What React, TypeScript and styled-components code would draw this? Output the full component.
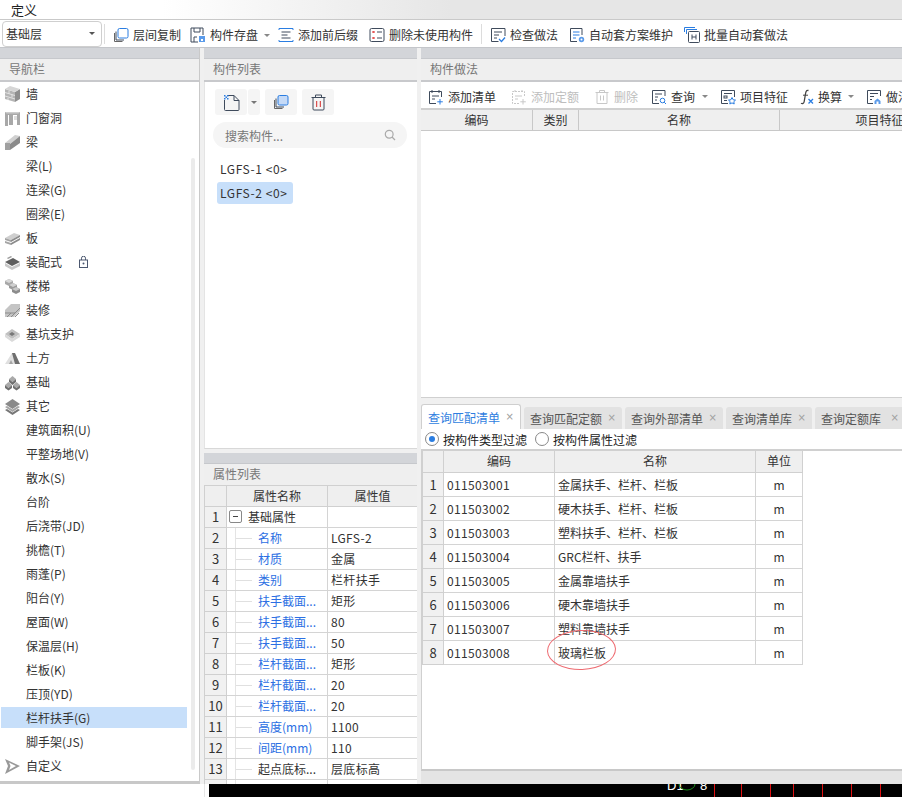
import React from "react";
import styled, { createGlobalStyle } from "styled-components";

const Global = createGlobalStyle`
  html, body { margin: 0; padding: 0; background: #fff; }
  * { box-sizing: border-box; }
  body { font-family: "Noto Sans CJK SC", "Noto Sans", sans-serif; font-size: 12px; color: #333; }
`;

const Page = styled.div`
  width: 902px; height: 797px; overflow: hidden; background: #fff;
  display: flex; flex-direction: column; position: relative;
`;
const MenuBar = styled.div`
  height: 20px; flex: none; padding-left: 11px; line-height: 19px; font-size: 13px; color: #222;
  border-bottom: 1px solid #c9c9c9;
  background: linear-gradient(90deg, #fff 18%, #e6e6e6 50%, #e6e6e6 100%);
`;
const Toolbar = styled.div`
  height: 28px; flex: none; display: flex; align-items: center; padding-left: 2px;
  background: #fff; border-bottom: 1px solid #c4c6ca; white-space: nowrap;
`;
const Select = styled.div`
  width: 100px; height: 26px; flex: none; border: 1px solid #cfcfcf; border-radius: 4px;
  display: flex; align-items: center; justify-content: space-between; padding: 0 6px 0 3px; color: #333; font-size: 12px;
`;
const Caret = styled.i<{ $ml?: number; $color?: string }>`
  display: inline-block; width: 0; height: 0; flex: none; margin-left: ${p => p.$ml ?? 0}px;
  border-left: 3px solid transparent; border-right: 3px solid transparent;
  border-top: 3px solid ${p => p.$color ?? "#666"};
`;
const Sep = styled.div<{ $ml: number; $mr: number }>`
  width: 1px; height: 20px; background: #dcdcdc; flex: none; margin: 0 ${p => p.$mr}px 0 ${p => p.$ml}px;
`;
const Tool = styled.div<{ $disabled?: boolean; $mr?: number }>`
  display: flex; align-items: center; gap: 4px; flex: none; margin-right: ${p => p.$mr ?? 9}px; padding-top: 3px;
  color: ${p => (p.$disabled ? "#bdbdbd" : "#333")}; font-size: 12px; line-height: 16px;
`;
const Workspace = styled.div`
  height: 736px; flex: none; display: flex; background: #f0f0f0;
`;
const NavCol = styled.div`
  width: 200px; flex: none; display: flex; flex-direction: column; border-right: 1px solid #c9c9c9;
  border-bottom: 3px solid #c8c8c8; background: #fff;
`;
const MidCol = styled.div`
  width: 213px; margin-left: 4px; flex: none; display: flex; flex-direction: column; gap: 4px;
`;
const RightCol = styled.div`
  width: 481px; margin-left: 4px; flex: none; display: flex; flex-direction: column;
`;
const Strip = styled.div`
  height: 11px; flex: none; background: #d3d5d9; border-bottom: 1px solid #c6c8cc;
`;
const PanelHead = styled.div<{ $compact?: boolean }>`
  height: ${p => (p.$compact ? 22 : 23)}px; flex: none; padding-left: 9px; line-height: 20px; color: #777; font-size: 12px;
  background: #efefef; border-bottom: ${p => (p.$compact ? "1px solid #d0d0d0" : "2px solid #c8c9cc")};
`;
const NavList = styled.div`
  flex: 1; position: relative; overflow: hidden;
`;
const NavItem = styled.div<{ $active?: boolean }>`
  height: 24px; display: flex; align-items: center; margin-left: 1px; width: 186px; position: relative; color: #333;
  &::before {
    content: ""; position: absolute; left: 0; right: 0; top: 1px; bottom: 2px;
    background: ${p => (p.$active ? "#c7dffa" : "transparent")};
  }
`;
const NavIconSlot = styled.span`
  width: 25px; flex: none; display: flex; justify-content: center; padding-right: 3px; position: relative;
`;
const NavText = styled.span`
  position: relative; line-height: 16px;
`;
const NavScroll = styled.div`
  position: absolute; left: 191px; top: 76px; width: 4px; height: 612px; background: #ebebeb; border-radius: 2px;
`;
const LockSlot = styled.span`
  position: relative; margin-left: 17px; display: flex;
`;
const ListPanel = styled.div`
  height: 401px; flex: none; display: flex; flex-direction: column; background: #f0f0f0;
`;
const ListBody = styled.div`
  flex: 1; background: #fff; padding: 7px 10px 0 9px; border-left: 1px solid #e4e4e4; border-bottom: 1px solid #d8d8d8;
`;
const BtnRow = styled.div`
  display: flex; padding-left: 1px; height: 26px;
`;
const IconBtn = styled.div<{ $w?: number; $mr?: number }>`
  width: ${p => p.$w ?? 32}px; height: 26px; background: #f5f5f5; border-radius: 3px; flex: none;
  margin-right: ${p => p.$mr ?? 0}px; display: flex; align-items: center; justify-content: center;
`;
const Search = styled.div`
  margin-top: 7px; width: 194px; margin-left: -1px; height: 26px; border-radius: 13px; background: #f5f5f5; color: #777;
  display: flex; align-items: center; justify-content: space-between; padding: 0 11px 0 12px;
`;
const CompList = styled.div`
  margin-top: 10px; display: flex; flex-direction: column; align-items: flex-start; margin-left: 3px;
`;
const CompItem = styled.div<{ $active?: boolean }>`
  height: 22px; line-height: 21px; padding: 0 5px 0 3px; border-radius: 3px; letter-spacing: .6px; color: #333;
  background: ${p => (p.$active ? "#c7dffa" : "transparent")}; margin-bottom: 2px;
`;
const PropPanel = styled.div`
  flex: 1; min-height: 0; display: flex; flex-direction: column; overflow: hidden; background: #fff;
`;
const Grid = styled.table<{ $w: number }>`
  border-collapse: collapse; table-layout: fixed; width: ${p => p.$w}px; font-size: 12px; color: #333;
  font-family: inherit;
`;
const HeadCell = styled.th<{ $h: number }>`
  height: ${p => p.$h}px; padding: 0; font-weight: 400; text-align: center; background: #efefef; color: #333;
  border: 1px solid #d0d0d0; border-top: none; line-height: 14px;
`;
const IndexCell = styled.td<{ $h: number }>`
  height: ${p => p.$h}px; padding: 0; text-align: center; background: #f1f1f1; color: #333; border: 1px solid #d0d0d0;
  font-size: 13px;
`;
const Cell = styled.td<{ $h: number; $center?: boolean; $pad?: number; $blue?: boolean }>`
  height: ${p => p.$h}px; padding: 0 0 0 ${p => p.$pad ?? 3}px; background: #fff; border: 1px solid #d4d4d4;
  text-align: ${p => (p.$center ? "center" : "left")}; white-space: nowrap; overflow: hidden;
  color: ${p => (p.$blue ? "#2c6fe3" : "#333")};
`;
const TreeCell = styled.div`
  display: flex; align-items: center; height: 20px; position: relative; padding-left: 31px;
  &::before { content: ""; position: absolute; left: 8px; top: -2px; bottom: -2px; width: 1px; background: #e4e4e4; }
  &::after { content: ""; position: absolute; left: 9px; top: 10px; width: 16px; height: 1px; background: #e0e0e0; }
`;
const RootCell = styled.div`
  display: flex; align-items: center; gap: 6px; padding-left: 2px;
`;
const Minus = styled.span`
  width: 13px; height: 13px; border: 1px solid #888; border-radius: 2px; display: flex; align-items: center; justify-content: center;
  &::after { content: ""; width: 5px; height: 1px; background: #444; }
`;
const MethodTop = styled.div`
  height: 350px; flex: none; display: flex; flex-direction: column; background: #fff; border-bottom: 1px solid #d0d0d0;
`;
const MethodBar = styled.div`
  height: 28px; flex: none; display: flex; align-items: center; padding-left: 7px; white-space: nowrap; overflow: hidden;
  border-bottom: 2px solid #d0d0d0;
`;
const MethodHead = styled.div`
  height: 21px; flex: none; display: grid; grid-template-columns: 112px 46px 201px 200px; background: #efefef;
  border-bottom: 1px solid #c8c8c8; overflow: hidden;
`;
const MethodCol = styled.div`
  text-align: center; line-height: 20px; border-right: 1px solid #c8c8c8; white-space: nowrap; color: #333;
`;
const MethodBlank = styled.div`
  flex: 1; background: #fff;
`;
const Tabs = styled.div`
  margin-top: 6px; height: 25px; flex: none; display: flex; align-items: flex-end; gap: 3px; overflow: hidden; background: #f0f0f0;
`;
const Tab = styled.div<{ $active?: boolean; $w: number }>`
  width: ${p => p.$w}px; flex: none; height: ${p => (p.$active ? 25 : 22)}px; padding-left: 6px;
  display: flex; align-items: center; justify-content: space-between; padding-right: 6px; border-radius: 3px 3px 0 0;
  color: ${p => (p.$active ? "#2f7ee0" : "#555")};
  background: ${p => (p.$active ? "#fff" : "#e2e2e2")};
  border: ${p => (p.$active ? "1px solid #cfcfcf" : "none")}; border-bottom: none; white-space: nowrap;
`;
const Close = styled.span`
  color: #a0a0a0; font-size: 10px; line-height: 12px; font-family: "DejaVu Sans", sans-serif;
`;
const FilterRow = styled.div`
  height: 22px; flex: none; background: #fff; display: flex; align-items: center; padding-left: 4px; gap: 4px; color: #222;
  border-bottom: 2px solid #d0d0d0;
`;
const Radio = styled.span<{ $on?: boolean }>`
  width: 14px; height: 14px; border-radius: 50%; border: 1px solid #888; flex: none; display: flex; align-items: center; justify-content: center;
  margin-left: ${p => (p.$on ? 0 : 4)}px;
  &::after { content: ""; width: 6px; height: 6px; border-radius: 50%; background: ${p => (p.$on ? "#2a7de1" : "transparent")}; }
`;
const MatchArea = styled.div`
  height: 320px; flex: none; background: #fff; position: relative; border-left: 1px solid #d0d0d0; border-bottom: 2px solid #c8c8c8; overflow: hidden;
`;
const RedRing = styled.div`
  position: absolute; left: 125px; top: 179px; width: 69px; height: 40px; border: 1px solid #ee6a70; border-radius: 50%; transform: rotate(-2deg);
`;
const BottomGrey = styled.div`
  flex: 1; background: #e4e4e4;
`;
const Footer = styled.div`
  flex: 1; display: flex; background: #fff;
`;
const FooterBlank = styled.div`
  width: 209px; flex: none; position: relative;
  &::after { content: ""; position: absolute; left: 204px; top: 0; bottom: 0; width: 1px; background: #e6e6e6; }
`;
const Canvas = styled.svg`
  flex: 1; height: 13px; display: block; background: #000;
`;
const CodeText = styled.span`
  letter-spacing: .34px;
`;

const S = "#3f4b5c", B = "#2a7de1";
const Ic = ({ children, s = 16 }: { children: React.ReactNode; s?: number }) => (
  <svg width={s} height={s} viewBox="0 0 16 16" fill="none" stroke={S} strokeWidth="1" style={{ flex: "none", display: "block" }}>{children}</svg>
);
const Copy = ({ fill = "#fff" }: { fill?: string }) => (
  <Ic><path d="M1.500 6v8.500h8" stroke="#666" /><path d="M3 4.500v8.500h8" stroke={S} /><rect x="5" y="1.500" width="10" height="9.500" rx="1.500" stroke={B} fill={fill} /></Ic>
);
const Save = () => (
  <Ic><path d="M1 1h12v7M1 1v14h7" /><path d="M4 1v4h6V1M4 15v-5h3" /><rect x="9" y="9" width="6" height="6" fill="#5b9bea" stroke="none" /><rect x="11" y="12" width="2" height="2" fill="#fff" stroke="none" /></Ic>
);
const Prefix = () => (
  <Ic><path d="M1 3V1.500h14V3M1 13v1.500h14V13" stroke={B} /><path d="M3.500 5h9M3.500 8h6M3.500 11h9" /></Ic>
);
const DelUnused = () => (
  <Ic><rect x="1" y="1.500" width="14" height="13" rx="1.500" /><path d="M3.500 4l2 2M5.500 4l-2 2M3.500 10l2 2M5.500 10l-2 2" stroke="#d22" /><path d="M8 5h5M8 11h5" /></Ic>
);
const Check = () => (
  <Ic><path d="M15 9V1.500H1.500v13h7" /><path d="M4 5h8M4 8h5M4 11h3" /><path d="M9 12l2.500 2.500L15 10.500" stroke={B} strokeWidth="1.300" /></Ic>
);
const Scheme = () => (
  <Ic><path d="M13 8V1.500H1.500v13H8" /><path d="M4 5h6.500M4 8h6.500M4 11h3" stroke={B} /><circle cx="12.500" cy="12.500" r="2.700" fill="#5b9bea" stroke="none" /><circle cx="12.500" cy="12.500" r="1" fill="#fff" stroke="none" /></Ic>
);
const Batch = () => (
  <Ic><path d="M.5 5V.5H11" stroke={B} /><path d="M2.500 7V2.500H13" stroke={B} /><rect x="4.500" y="4.500" width="11" height="11" rx="1" /><path d="M8 7.500v5M12 7.500v5M8 10h4" /></Ic>
);
const AddList = ({ dim }: { dim?: boolean }) => {
  const c = dim ? "#c8c8c8" : S; const a = dim ? "#c8c8c8" : B;
  return <Ic><path d="M8 14.500H1.500V2.500h12V8M4 1v3M11 1v3" stroke={c} strokeDasharray={dim ? "2 1" : undefined} /><path d="M4 7h7M4 10h3" stroke={c} /><path d="M12 10v5.500M9.300 12.800h5.500" stroke={a} /></Ic>;
};
const TrashDim = () => (
  <Ic><path d="M1.500 3.500h13M5.500 3V1.500h5V3M3 3.500v11h10v-11M6.500 6.500v5M9.500 6.500v5" stroke="#c8c8c8" /></Ic>
);
const Query = () => (
  <Ic><path d="M14 7V1.500H1.500v13H8" /><path d="M4 5h7M4 8h3M4 11h2" /><circle cx="11.500" cy="11.500" r="2.300" stroke={B} /><path d="M13.200 13.200L15 15" stroke={B} /></Ic>
);
const Feature = () => (
  <Ic><path d="M14.500 8V1.500H1.500v13H8" /><path d="M4 4.500h8" /><rect x="4" y="7" width="3" height="2" /><path d="M4 11.500h3" /><path d="M12 8.500l1.200 2.300 2.300.3-1.700 1.600.4 2.300-2.200-1.100-2.200 1.100.4-2.300-1.700-1.600 2.300-.3z" stroke={B} /></Ic>
);
const Fx = () => (
  <svg width="14" height="16" viewBox="0 0 14 16" style={{ flex: "none", display: "block" }}>
    <path d="M8.500 1.500C6 1 5.700 3 5.300 6L4.200 12.500C3.900 14.500 2.500 15 1 14.200" fill="none" stroke="#444" strokeWidth="1.300" />
    <path d="M3 6.200h5" stroke="#444" strokeWidth="1" />
    <path d="M8.500 10l4.500 4.500M13 10l-4.500 4.500" stroke={B} strokeWidth="1.300" />
  </svg>
);
const Practice = () => (
  <Ic><path d="M14.500 7V1.500H1.500v13H7" /><path d="M4 4.500h8M4 7.500h4M4 10.500h2" /><path d="M8.500 15v-3l3-2.500 3 2.500v3z" fill="#5b9bea" stroke="none" /><rect x="10.500" y="12.500" width="2" height="2.500" fill="#fff" stroke="none" /></Ic>
);
const NewDoc = () => (
  <svg width="17" height="17" viewBox="0 0 17 17" fill="none" style={{ display: "block" }}>
    <path d="M5 1.500h6l5 5v9a1 1 0 0 1-1 1H2.500a1 1 0 0 1-1-1V6" stroke={S} />
    <path d="M11 1.500v5h5" stroke={S} />
    <path d="M1 1h1.500v1.500H1zM4 1h1.500v1.500H4zM2.500 2.500H4V4H2.500zM1 4h1.500v1.500H1zM4 4h1.500v1.500H4z" fill={B} />
  </svg>
);
const Trash = () => (
  <svg width="15" height="17" viewBox="0 0 15 17" fill="none" style={{ display: "block" }}>
    <path d="M.5 3.500h14M4.500 3V1h6v2" stroke={S} />
    <path d="M2 3.500v11.500a1 1 0 0 0 1 1h9a1 1 0 0 0 1-1V3.500" stroke={S} />
    <path d="M5.700 7v6M9.300 7v6" stroke="#d42a2a" />
  </svg>
);
const Magnifier = () => (
  <svg width="12" height="12" viewBox="0 0 12 12" fill="none" style={{ display: "block" }}>
    <circle cx="5.200" cy="5.200" r="3.900" stroke="#aaa" strokeWidth="1.200" /><path d="M8 8l3 3" stroke="#aaa" strokeWidth="1.200" />
  </svg>
);
const Lock = () => (
  <svg width="9" height="12" viewBox="0 0 9 12" fill="none" style={{ display: "block" }}>
    <rect x=".5" y="4" width="8" height="7.500" stroke="#4c5870" /><path d="M2.500 4V2.200a2 2 0 0 1 4 0V4" stroke="#4c5870" /><circle cx="4.500" cy="7.500" r="1" fill="#4c5870" />
  </svg>
);

const G = ({ children }: { children: React.ReactNode }) => (
  <svg width="17" height="17" viewBox="0 0 17 17" style={{ display: "block" }}>{children}</svg>
);
const navIcons: Record<string, React.ReactNode> = {
  wall: <G><path d="M1 3l10 3v10L1 13z" fill="#b5b5b5" /><path d="M11 6l5-3v10l-5 3z" fill="#8f8f8f" /><path d="M1 3l5-3 10 3-5 3z" fill="#d6d6d6" /><path d="M1 6.500l10 3M1 10l10 3M5 4.500v3M8 8.500v3M4 12v2" stroke="#eee" strokeWidth=".8" /></G>,
  door: <G><path d="M1 2h15v13h-3V5H9v10H5V5H4v11H1z" fill="#a8a8a8" /><path d="M1 2h15l-1.500 1.500H2.500z" fill="#cdcdcd" /><rect x="10" y="6" width="3" height="4" fill="#dedede" /></G>,
  beam: <G><path d="M1 9l10-8 5 1-10 8z" fill="#d0d0d0" /><path d="M1 9h5v7H1z" fill="#a0a0a0" /><path d="M6 10L16 2v7L6 16z" fill="#8a8a8a" /></G>,
  slab: <G><path d="M1 8l9-5 6 2-9 5z" fill="#cfcfcf" /><path d="M1 8l6 2v2l-6-2zM1 11l6 2v2l-6-2z" fill="#a5a5a5" /><path d="M7 10l9-5v2l-9 5zM7 13l9-5v2l-9 5z" fill="#8b8b8b" /></G>,
  prefab: <G><path d="M1 8l7 4 8-4-7-4z" fill="#5f5f5f" /><path d="M1 9l7 4v3l-7-4zM8 13l8-4v3l-8 4z" fill="#c8c8c8" /><path d="M3 4l4-2 1 1-4 2z" fill="#999" /></G>,
  stairs: <G><path d="M1 3l4-2 4 2v3L5 8 1 6z" fill="#a8a8a8" /><path d="M1 3l4-2 4 2-4 2z" fill="#d8d8d8" /><path d="M5 7l4-2 4 2v3l-4 2-4-2z" fill="#9a9a9a" /><path d="M5 7l4-2 4 2-4 2z" fill="#d0d0d0" /><path d="M8 11l4-2 4 2v3l-4 2-4-2z" fill="#8c8c8c" /><path d="M8 11l4-2 4 2-4 2z" fill="#c8c8c8" /></G>,
  finish: <G><path d="M1 8l6-6h9v7l-6 6H1z" fill="#c4c4c4" /><path d="M1 11h10l5-5M3 15l4-4M7 15l4-4M11 15l4-4" stroke="#8b8b8b" strokeWidth="1" fill="none" /></G>,
  pit: <G><path d="M1 8l7-5 8 5-8 5z" fill="#c0c0c0" /><path d="M1 8l7 5v3L1 11zM16 8l-8 5v3l8-5z" fill="#dadada" /><path d="M5 8l3-2 3 2-3 2z" fill="#777" /></G>,
  earth: <G><path d="M1 14L8 3l8 11z" fill="#e0e0e0" /><path d="M8 3l3 0 5 11h-5z" fill="#6f6f6f" /><path d="M5 14l2-4 2 4z" fill="#a5a5a5" /></G>,
  found: <G><path d="M5 5l3.500-3L12 5l-3.500 3z" fill="#aaa" /><path d="M5 5l3.500 3v3L5 8zM12 5L8.500 8v3L12 8z" fill="#6f6f6f" /><path d="M1 11l3.500-3L8 11l-3.500 3z" fill="#aaa" /><path d="M1 11l3.500 3v2.500L1 14zM8 11l-3.500 3v2.500L8 14z" fill="#6f6f6f" /><path d="M9 11l3.500-3 3.500 3-3.500 3z" fill="#aaa" /><path d="M9 11l3.500 3v2.500L9 14zM16 11l-3.500 3v2.500L16 14z" fill="#6f6f6f" /></G>,
  other: <G><path d="M1 6l7.500-5L16 6l-7.500 5z" fill="#8a8a8a" /><path d="M1 9l2-1 5.500 3.500L14 8l2 1-7.500 5z" fill="#a5a5a5" /><path d="M1 12l2-1 5.500 3.500L14 11l2 1-7.500 5z" fill="#777" /></G>,
  custom: <G><path d="M1 1l15 7-15 8 3-8z" fill="#999" /><path d="M5 4.500L12 8l-7 4 1.500-4z" fill="#fff" /></G>,
};

type NavEntry = { t: string; i?: string; lock?: boolean; active?: boolean };
const nav: NavEntry[] = [
  { t: "墙", i: "wall" }, { t: "门窗洞", i: "door" }, { t: "梁", i: "beam" }, { t: "梁(L)" }, { t: "连梁(G)" }, { t: "圈梁(E)" },
  { t: "板", i: "slab" }, { t: "装配式", i: "prefab", lock: true }, { t: "楼梯", i: "stairs" }, { t: "装修", i: "finish" },
  { t: "基坑支护", i: "pit" }, { t: "土方", i: "earth" }, { t: "基础", i: "found" }, { t: "其它", i: "other" },
  { t: "建筑面积(U)" }, { t: "平整场地(V)" }, { t: "散水(S)" }, { t: "台阶" }, { t: "后浇带(JD)" }, { t: "挑檐(T)" }, { t: "雨蓬(P)" },
  { t: "阳台(Y)" }, { t: "屋面(W)" }, { t: "保温层(H)" }, { t: "栏板(K)" }, { t: "压顶(YD)" }, { t: "栏杆扶手(G)", active: true },
  { t: "脚手架(JS)" }, { t: "自定义", i: "custom" },
];

const props: [string, string, boolean][] = [
  ["名称", "LGFS-2", true], ["材质", "金属", true], ["类别", "栏杆扶手", true], ["扶手截面...", "矩形", true], ["扶手截面...", "80", true],
  ["扶手截面...", "50", true], ["栏杆截面...", "矩形", true], ["栏杆截面...", "20", true], ["栏杆截面...", "20", true],
  ["高度(mm)", "1100", true], ["间距(mm)", "110", true], ["起点底标...", "层底标高", false], ["", "", false],
];
const matches: [string, string][] = [
  ["011503001", "金属扶手、栏杆、栏板"], ["011503002", "硬木扶手、栏杆、栏板"], ["011503003", "塑料扶手、栏杆、栏板"], ["011503004", "GRC栏杆、扶手"],
  ["011503005", "金属靠墙扶手"], ["011503006", "硬木靠墙扶手"], ["011503007", "塑料靠墙扶手"], ["011503008", "玻璃栏板"],
];
const tabs: [string, number, boolean][] = [["查询匹配清单", 100, true], ["查询匹配定额", 98, false], ["查询外部清单", 98, false], ["查询清单库", 86, false], ["查询定额库", 90, false]];

export default function App() {
  return (
    <Page>
      <Global />
      <MenuBar>定义</MenuBar>
      <Toolbar>
        <Select>基础层<Caret $color="#555" /></Select>
        <Sep $ml={2} $mr={8} />
        <Tool $mr={9}><Copy />层间复制</Tool>
        <Tool $mr={8}><Save />构件存盘<Caret $ml={2} $color="#888" /></Tool>
        <Tool $mr={11}><Prefix />添加前后缀</Tool>
        <Tool $mr={8}><DelUnused />删除未使用构件</Tool>
        <Sep $ml={0} $mr={8} />
        <Tool $mr={11}><Check />检查做法</Tool>
        <Tool $mr={11}><Scheme />自动套方案维护</Tool>
        <Tool $mr={0}><Batch />批量自动套做法</Tool>
      </Toolbar>
      <Workspace>
        <NavCol>
          <Strip />
          <PanelHead>导航栏</PanelHead>
          <NavList>
            {nav.map(n => (
              <NavItem key={n.t} $active={n.active}>
                <NavIconSlot>{n.i ? navIcons[n.i] : null}</NavIconSlot>
                <NavText>{n.t}</NavText>
                {n.lock ? <LockSlot><Lock /></LockSlot> : null}
              </NavItem>
            ))}
            <NavScroll />
          </NavList>
        </NavCol>
        <MidCol>
          <ListPanel>
            <Strip />
            <PanelHead>构件列表</PanelHead>
            <ListBody>
              <BtnRow>
                <IconBtn $mr={1}><NewDoc /></IconBtn>
                <IconBtn $w={12} $mr={5}><Caret $color="#777" /></IconBtn>
                <IconBtn $mr={5}><Copy fill="#c5daf7" /></IconBtn>
                <IconBtn><Trash /></IconBtn>
              </BtnRow>
              <Search>搜索构件...<Magnifier /></Search>
              <CompList>
                <CompItem>LGFS-1 &lt;0&gt;</CompItem>
                <CompItem $active>LGFS-2 &lt;0&gt;</CompItem>
              </CompList>
            </ListBody>
          </ListPanel>
          <PropPanel>
            <Strip />
            <PanelHead $compact>属性列表</PanelHead>
            <Grid $w={213}>
              <colgroup><col style={{ width: 22 }} /><col style={{ width: 101 }} /><col style={{ width: 90 }} /></colgroup>
              <thead><tr><HeadCell $h={20} /><HeadCell $h={20}>属性名称</HeadCell><HeadCell $h={20}>属性值</HeadCell></tr></thead>
              <tbody>
                <tr><IndexCell $h={21}>1</IndexCell><Cell $h={21} $pad={0}><RootCell><Minus />基础属性</RootCell></Cell><Cell $h={21} /></tr>
                {props.map((p, i) => (
                  <tr key={i}>
                    <IndexCell $h={21}>{i < 12 ? i + 2 : ""}</IndexCell>
                    <Cell $h={21} $pad={0} $blue={p[2]}><TreeCell>{p[0]}</TreeCell></Cell>
                    <Cell $h={21}><CodeText>{p[1]}</CodeText></Cell>
                  </tr>
                ))}
              </tbody>
            </Grid>
          </PropPanel>
        </MidCol>
        <RightCol>
          <MethodTop>
            <Strip />
            <PanelHead>构件做法</PanelHead>
            <MethodBar>
              <Tool $mr={15}><AddList />添加清单</Tool>
              <Tool $mr={15} $disabled><AddList dim />添加定额</Tool>
              <Tool $mr={13} $disabled><TrashDim />删除</Tool>
              <Tool $mr={12}><Query />查询<Caret $ml={3} $color="#888" /></Tool>
              <Tool $mr={12}><Feature />项目特征</Tool>
              <Tool $mr={12}><Fx />换算<Caret $ml={2} $color="#888" /></Tool>
              <Tool><Practice />做法</Tool>
            </MethodBar>
            <MethodHead>
              <MethodCol>编码</MethodCol><MethodCol>类别</MethodCol><MethodCol>名称</MethodCol><MethodCol>项目特征</MethodCol>
            </MethodHead>
            <MethodBlank />
          </MethodTop>
          <Tabs>
            {tabs.map(t => (
              <Tab key={t[0]} $w={t[1]} $active={t[2]}>{t[0]}<Close>×</Close></Tab>
            ))}
          </Tabs>
          <FilterRow>
            <Radio $on />按构件类型过滤<Radio />按构件属性过滤
          </FilterRow>
          <MatchArea>
            <Grid $w={380}>
              <colgroup><col style={{ width: 21 }} /><col style={{ width: 111 }} /><col style={{ width: 201 }} /><col style={{ width: 47 }} /></colgroup>
              <thead><tr><HeadCell $h={21} /><HeadCell $h={21}>编码</HeadCell><HeadCell $h={21}>名称</HeadCell><HeadCell $h={21}>单位</HeadCell></tr></thead>
              <tbody>
                {matches.map((m, i) => (
                  <tr key={m[0]}>
                    <IndexCell $h={24}>{i + 1}</IndexCell>
                    <Cell $h={24}><CodeText>{m[0]}</CodeText></Cell>
                    <Cell $h={24}>{m[1]}</Cell>
                    <Cell $h={24} $center $pad={0}>m</Cell>
                  </tr>
                ))}
              </tbody>
            </Grid>
            <RedRing />
          </MatchArea>
          <BottomGrey />
        </RightCol>
      </Workspace>
      <Footer>
        <FooterBlank />
        <Canvas viewBox="0 0 693 13" preserveAspectRatio="none">
          <text x="458" y="6" fill="#fff" fontSize="13" fontFamily="Liberation Sans">D1</text>
          <path d="M470 0a8 6 0 0 0 16 0" fill="none" stroke="#1a8a1a" />
          <text x="491" y="6" fill="#fff" fontSize="13" fontFamily="Liberation Sans">8</text>
          {[505, 532, 561, 584, 613, 642, 671].map(x => <path key={x} d={`M${x + .5} 0v13`} stroke="#e01010" />)}
        </Canvas>
      </Footer>
    </Page>
  );
}
